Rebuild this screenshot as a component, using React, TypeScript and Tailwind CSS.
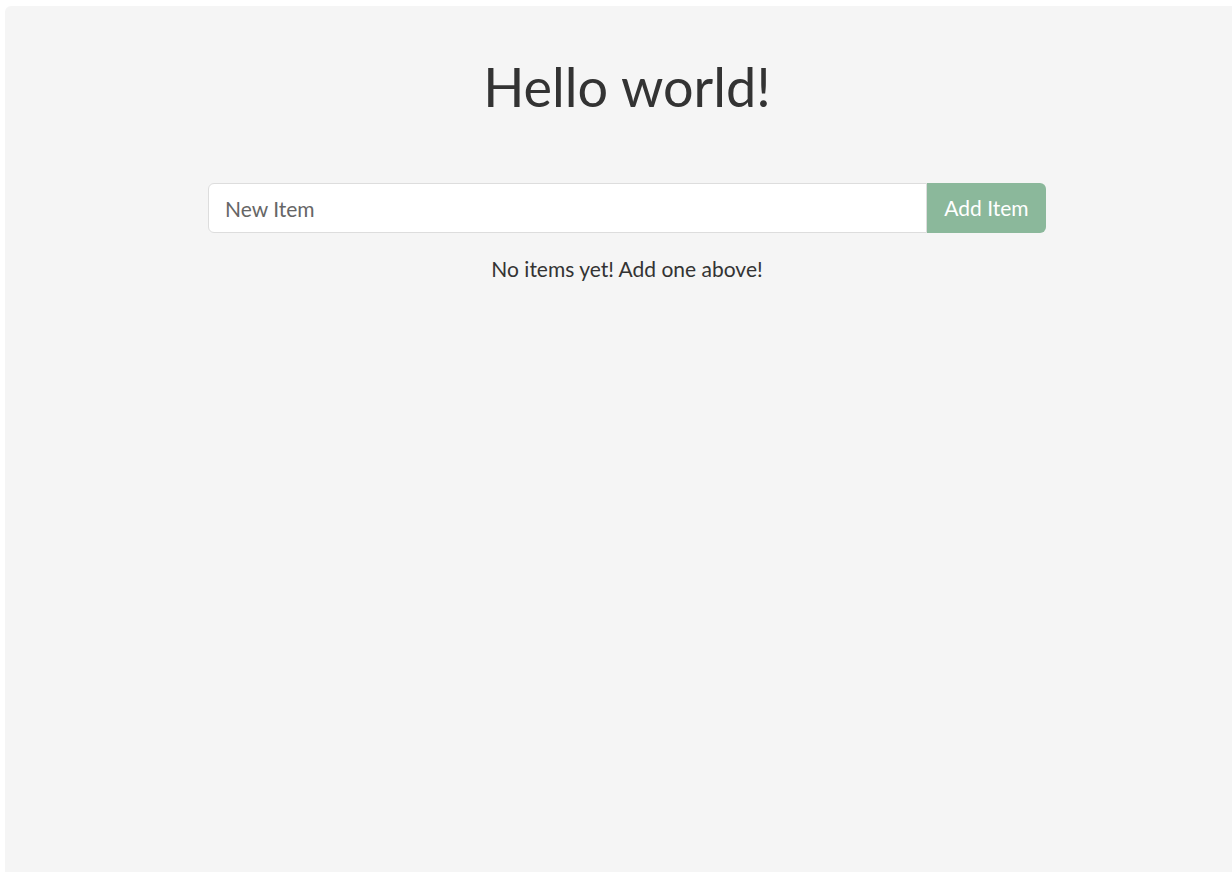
export default function App() {
  return (
    <div className="h-[872px] w-[1232px] overflow-hidden bg-white pl-[5px] pt-[6px]" style={{ fontFamily: "Lato, 'Noto Sans', sans-serif" }}>
      <div className="flex h-[866px] w-[1244px] flex-col items-center rounded-tl-md bg-[#f5f5f5]">
        <h1 className="mt-[49px] text-[54px] leading-[64px] text-[#333]">Hello world!</h1>
        <div className="mt-[64px] flex h-[50px] w-[838px]">
          <input
            type="text"
            placeholder="New Item"
            className="h-full flex-1 rounded-l-md border border-[#ddd] bg-white px-4 text-[21px] text-[#333] outline-none placeholder:text-[#666]"
          />
          <button className="h-full w-[119px] rounded-r-md bg-[#8bb89b] text-[21px] text-white">Add Item</button>
        </div>
        <p className="mt-[23px] text-[21px] leading-[26px] text-[#333]">No items yet! Add one above!</p>
      </div>
    </div>
  );
}
